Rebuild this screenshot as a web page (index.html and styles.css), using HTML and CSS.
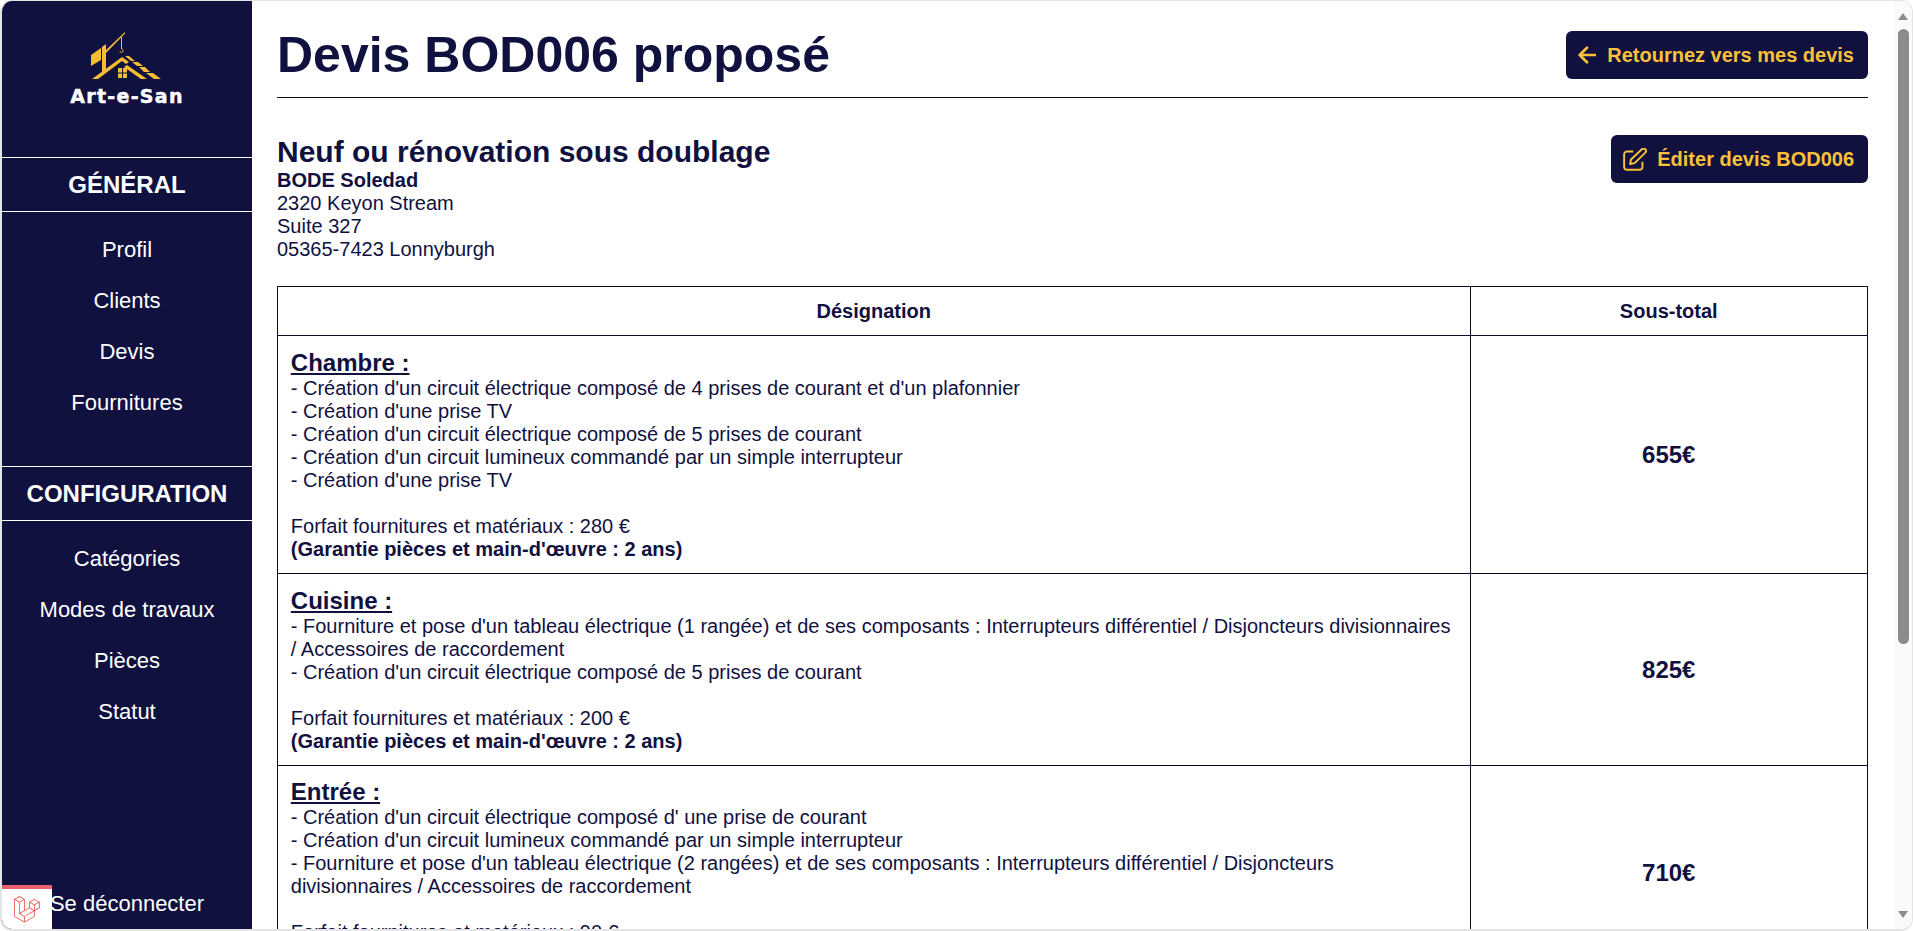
FILE: index.html
```html
<!doctype html>
<html lang="fr">
	<head>
		<meta charset="utf-8"/>
		<title>Devis BOD006 proposé</title>
		<link rel="stylesheet" href="styles.css">
	</head>
	<body>
		<div class="window">
			<aside class="sidebar">
				<div class="logo">
					<svg class="logo-img" viewBox="30 10 76 50" width="76" height="50">
						<g fill="#f5bd35">
							<polygon points="43,54 43,27 47,24 47,51"/>
							<polygon points="32,35 42,28 42,40 32,46"/>
							<polygon points="46,31 66,12 66,13.5 47,33"/>
							<rect x="62" y="17" width="1" height="12"/>
							<polygon points="33,59 63,37 70,42 67,44 63,41 39,59"/>
							<polygon points="66,36 70,36 76,41 72,41"/>
							<polygon points="73,42 79,42 84,46 78,46"/>
							<polygon points="80,47 86,47 91,52 85,52"/>
							<polygon points="87,53 94,53 102,59 95,59"/>
							<polygon points="68,45 88,59 82,59 65,47"/>
							<rect x="59" y="48" width="4" height="4.5"/>
							<rect x="64" y="48" width="4" height="4.5"/>
							<rect x="59" y="53.5" width="4" height="4.5"/>
							<rect x="64" y="53.5" width="4" height="4.5"/>
						</g>
						<path d="M62.5 29c2 0 2 3.500 0 3.500-1 0-1.500-.8-1.500-1.500" fill="none" stroke="#f5bd35" stroke-width="1"/>
					</svg>
					<div class="logo-name">Art-e-San</div>
				</div>
				<div class="side-title">GÉNÉRAL</div>
				<ul class="side-nav">
					<li><a>Profil</a></li>
					<li><a>Clients</a></li>
					<li><a>Devis</a></li>
					<li><a>Fournitures</a></li>
				</ul>
				<div class="side-title">CONFIGURATION</div>
				<ul class="side-nav">
					<li><a>Catégories</a></li>
					<li><a>Modes de travaux</a></li>
					<li><a>Pièces</a></li>
					<li><a>Statut</a></li>
				</ul>
				<a class="logout">Se déconnecter</a>
			</aside>
			<main class="content">
				<header class="page-head">
					<h1>Devis BOD006 proposé</h1>
					<a class="btn">
						<svg class="btn-icon" viewBox="1 1 16 16" width="18" height="18"><path d="M16 9H2.500M9 2.500L2.500 9 9 15.500" fill="none" stroke="#fbc13a" stroke-width="2.400" stroke-linecap="round" stroke-linejoin="round"/></svg>
						Retournez vers mes devis
					</a>
				</header>
				<section class="info">
					<div>
						<h2>Neuf ou rénovation sous doublage</h2>
						<strong>BODE Soledad</strong><br>
						2320 Keyon Stream<br>
						Suite 327<br>
						05365-7423 Lonnyburgh
					</div>
					<a class="btn btn-edit">
						<svg class="btn-icon" viewBox="2 2 21 20" width="24" height="23"><path d="M11 5H5.500A2.500 2.500 0 0 0 3 7.500v11A2.500 2.500 0 0 0 5.500 21h11a2.500 2.500 0 0 0 2.500-2.500V14M9 12l-.8 4 4-.8L21.500 6a1.800 1.800 0 0 0-3-3L9 12z" fill="none" stroke="#fbc13a" stroke-width="1.700" stroke-linejoin="round"/></svg>
						Éditer devis BOD006
					</a>
				</section>
				<table class="devis">
					<thead>
						<tr>
							<th class="col-name">Désignation</th>
							<th>Sous-total</th>
						</tr>
					</thead>
					<tbody>
						<tr>
							<td>
								<h3>Chambre :</h3>
								- Création d'un circuit électrique composé de 4 prises de courant et d'un plafonnier<br>
								- Création d'une prise TV<br>
								- Création d'un circuit électrique composé de 5 prises de courant<br>
								- Création d'un circuit lumineux commandé par un simple interrupteur<br>
								- Création d'une prise TV<br>
								<br>
								Forfait fournitures et matériaux : 280 €<br>
								<strong>(Garantie pièces et main-d'œuvre : 2 ans)</strong>
							</td>
							<td class="total">655€</td>
						</tr>
						<tr>
							<td>
								<h3>Cuisine :</h3>
								- Fourniture et pose d'un tableau électrique (1 rangée) et de ses composants : Interrupteurs différentiel / Disjoncteurs divisionnaires / Accessoires de raccordement<br>
								- Création d'un circuit électrique composé de 5 prises de courant<br>
								<br>
								Forfait fournitures et matériaux : 200 €<br>
								<strong>(Garantie pièces et main-d'œuvre : 2 ans)</strong>
							</td>
							<td class="total">825€</td>
						</tr>
						<tr>
							<td>
								<h3>Entrée :</h3>
								- Création d'un circuit électrique composé d' une prise de courant<br>
								- Création d'un circuit lumineux commandé par un simple interrupteur<br>
								- Fourniture et pose d'un tableau électrique (2 rangées) et de ses composants : Interrupteurs différentiel / Disjoncteurs divisionnaires / Accessoires de raccordement<br>
								<br>
								Forfait fournitures et matériaux : 90 €<br>
								<strong>(Garantie pièces et main-d'œuvre : 2 ans)</strong>
							</td>
							<td class="total">710€</td>
						</tr>
					</tbody>
				</table>
			</main>
			<div class="scrollbar">
				<span class="arrow-up"></span>
				<span class="thumb"></span>
				<span class="arrow-down"></span>
			</div>
			<!-- barre de debug -->
			<div class="debugbar">
				<svg viewBox="0 0 50 52" width="26" height="27"><path fill="#ea5a4e" d="M49.626 11.564a.809.809 0 0 1 .028.209v10.972a.8.8 0 0 1-.402.694l-9.209 5.302V39.25c0 .286-.152.55-.4.694L20.42 51.01c-.044.025-.092.041-.14.058-.018.006-.035.017-.054.022a.805.805 0 0 1-.41 0c-.022-.006-.042-.018-.063-.026-.044-.016-.09-.03-.132-.054L.402 39.944A.801.801 0 0 1 0 39.25V6.334c0-.072.01-.142.028-.21.006-.023.02-.044.028-.067.015-.042.029-.085.051-.124.015-.026.037-.047.055-.071.023-.032.044-.065.071-.093.023-.023.053-.04.079-.06.029-.024.055-.05.088-.069h.001l9.61-5.533a.802.802 0 0 1 .8 0l9.61 5.533h.002c.032.02.059.045.088.068.026.02.055.038.078.06.028.029.048.062.072.094.017.024.04.045.054.071.023.04.036.082.052.124.008.023.022.044.028.068a.809.809 0 0 1 .028.209v20.559l8.008-4.611v-10.51c0-.07.01-.141.028-.208.007-.024.02-.045.028-.068.016-.042.03-.085.052-.124.015-.026.037-.047.054-.071.024-.032.044-.065.072-.093.023-.023.052-.04.078-.06.03-.024.056-.05.088-.069h.001l9.611-5.533a.801.801 0 0 1 .8 0l9.61 5.533c.034.02.06.045.09.068.025.02.054.038.077.06.028.029.048.062.072.094.018.024.04.045.054.071.023.039.036.082.052.124.009.023.022.044.028.068zm-1.574 10.718v-9.124l-3.363 1.936-4.646 2.675v9.124l8.01-4.611zm-9.61 16.505v-9.13l-4.57 2.61-13.05 7.448v9.216l17.62-10.144zM1.602 7.719v31.068L19.22 48.93v-9.214l-9.204-5.209-.003-.002-.004-.002c-.031-.018-.057-.044-.086-.066-.025-.02-.054-.036-.076-.058l-.002-.003c-.026-.025-.044-.056-.066-.084-.02-.027-.044-.05-.06-.078l-.001-.003c-.018-.03-.029-.066-.042-.1-.013-.03-.03-.058-.038-.09v-.001c-.01-.038-.012-.078-.016-.117-.004-.03-.012-.06-.012-.09v-21.483L4.965 9.654 1.602 7.72zm8.81-5.994L2.405 6.334l8.005 4.609 8.006-4.61-8.006-4.608zm4.164 28.764l4.645-2.674V7.719l-3.363 1.936-4.646 2.675v20.096l3.364-1.937zM39.243 7.164l-8.006 4.609 8.006 4.609 8.005-4.61-8.005-4.608zm-.801 10.605l-4.646-2.675-3.363-1.936v9.124l4.645 2.674 3.364 1.937v-9.124zM20.02 38.33l11.743-6.704 5.87-3.35-8-4.606-9.211 5.303-8.395 4.833 7.993 4.524z"/></svg>
			</div>
		</div>
	</body>
</html>
```

FILE: styles.css
```css
*{margin:0;padding:0;box-sizing:border-box;}
ul{
	list-style:none;
}
html,body{
	height:100%;
	overflow:hidden;
}
body{
	background:#fff;
	font-family:"Liberation Sans",Arial,sans-serif;
	font-size:20px;
	line-height:23px;
	color:#10113f;
}
.window{
	position:relative;
	display:flex;
	height:100%;
	overflow:hidden;
	border:solid #e4e4e4;
	border-width:1px 1px 2px 2px;
	border-radius:12px;
	background:#fff;
}

/* sidebar */
.sidebar{
	display:flex;
	flex-direction:column;
	flex:none;
	width:250px;
	background:#10113f;
	color:#fff;
}
.logo{
	display:flex;
	flex-direction:column;
	align-items:center;
	height:156px;
	padding-top:29px;
}
.logo-name{
	margin-top:6px;
	font-family:"DejaVu Sans",sans-serif;
	font-size:19px;
	line-height:20px;
	font-weight:bold;
	letter-spacing:1.300px;
	-webkit-text-stroke:.5px #fff;
}
.side-title{
	height:55px;
	line-height:54px;
	border-top:1px solid #fff;
	border-bottom:1px solid #fff;
	font-size:24px;
	font-weight:bold;
	text-align:center;
}
.side-nav{
	height:254px;
	padding-top:12px;
}
.side-nav li{
	height:51px;
	line-height:51px;
	font-size:22px;
	text-align:center;
}
.logout{
	margin-top:auto;
	padding-bottom:14px;
	font-size:22px;
	text-align:center;
}

/* contenu */
.content{
	flex:1;
	min-width:0;
	padding:0 26px 0 25px;
}
.page-head{
	display:flex;
	justify-content:space-between;
	align-items:center;
	height:97px;
	padding-top:12px;
	border-bottom:1px solid #0b0b2b;
}
h1{
	font-size:50px;
	line-height:55px;
}
.btn{
	display:flex;
	align-items:center;
	gap:11px;
	height:48px;
	padding:0 14px 0 12px;
	border-radius:6px;
	background:#10113f;
	color:#fbc13a;
	font-size:20px;
	font-weight:bold;
	cursor:pointer;
}
.btn-edit{
	gap:10px;
}
.info{
	display:flex;
	justify-content:space-between;
	align-items:flex-start;
	padding-top:37px;
	margin-bottom:25px;
}
h2{
	font-size:30px;
	line-height:34px;
}
h3{
	font-size:24px;
	line-height:28px;
	text-decoration:underline;
}
.devis{
	width:100%;
	border-collapse:collapse;
	table-layout:fixed;
}
.devis th,.devis td{
	border:1px solid #0b0b2b;
	padding:12.800px;
}
.devis th{
	padding:12.500px;
}
.devis td{
	padding-bottom:12px;
}
.col-name{
	width:75%;
}
.total{
	font-size:24px;
	font-weight:bold;
	text-align:center;
}

/* barre de defilement */
.scrollbar{
	display:flex;
	flex-direction:column;
	align-items:center;
	flex:none;
	width:18px;
	padding:12px 0 11px;
	background:#fafafa;
}
.arrow-up,.arrow-down{
	width:0;
	height:0;
	border-left:5.500px solid transparent;
	border-right:5.500px solid transparent;
}
.arrow-up{
	border-bottom:7px solid #8c8c8c;
}
.arrow-down{
	margin-top:auto;
	border-top:7px solid #8c8c8c;
}
.thumb{
	width:11px;
	height:615px;
	margin-top:9px;
	border-radius:6px;
	background:#8c8c8c;
}

/* debugbar */
.debugbar{
	position:absolute;
	left:0;
	bottom:0;
	display:flex;
	align-items:center;
	justify-content:center;
	width:50px;
	height:44px;
	border-top:4px solid #e8606a;
	background:#fff;
}
```
